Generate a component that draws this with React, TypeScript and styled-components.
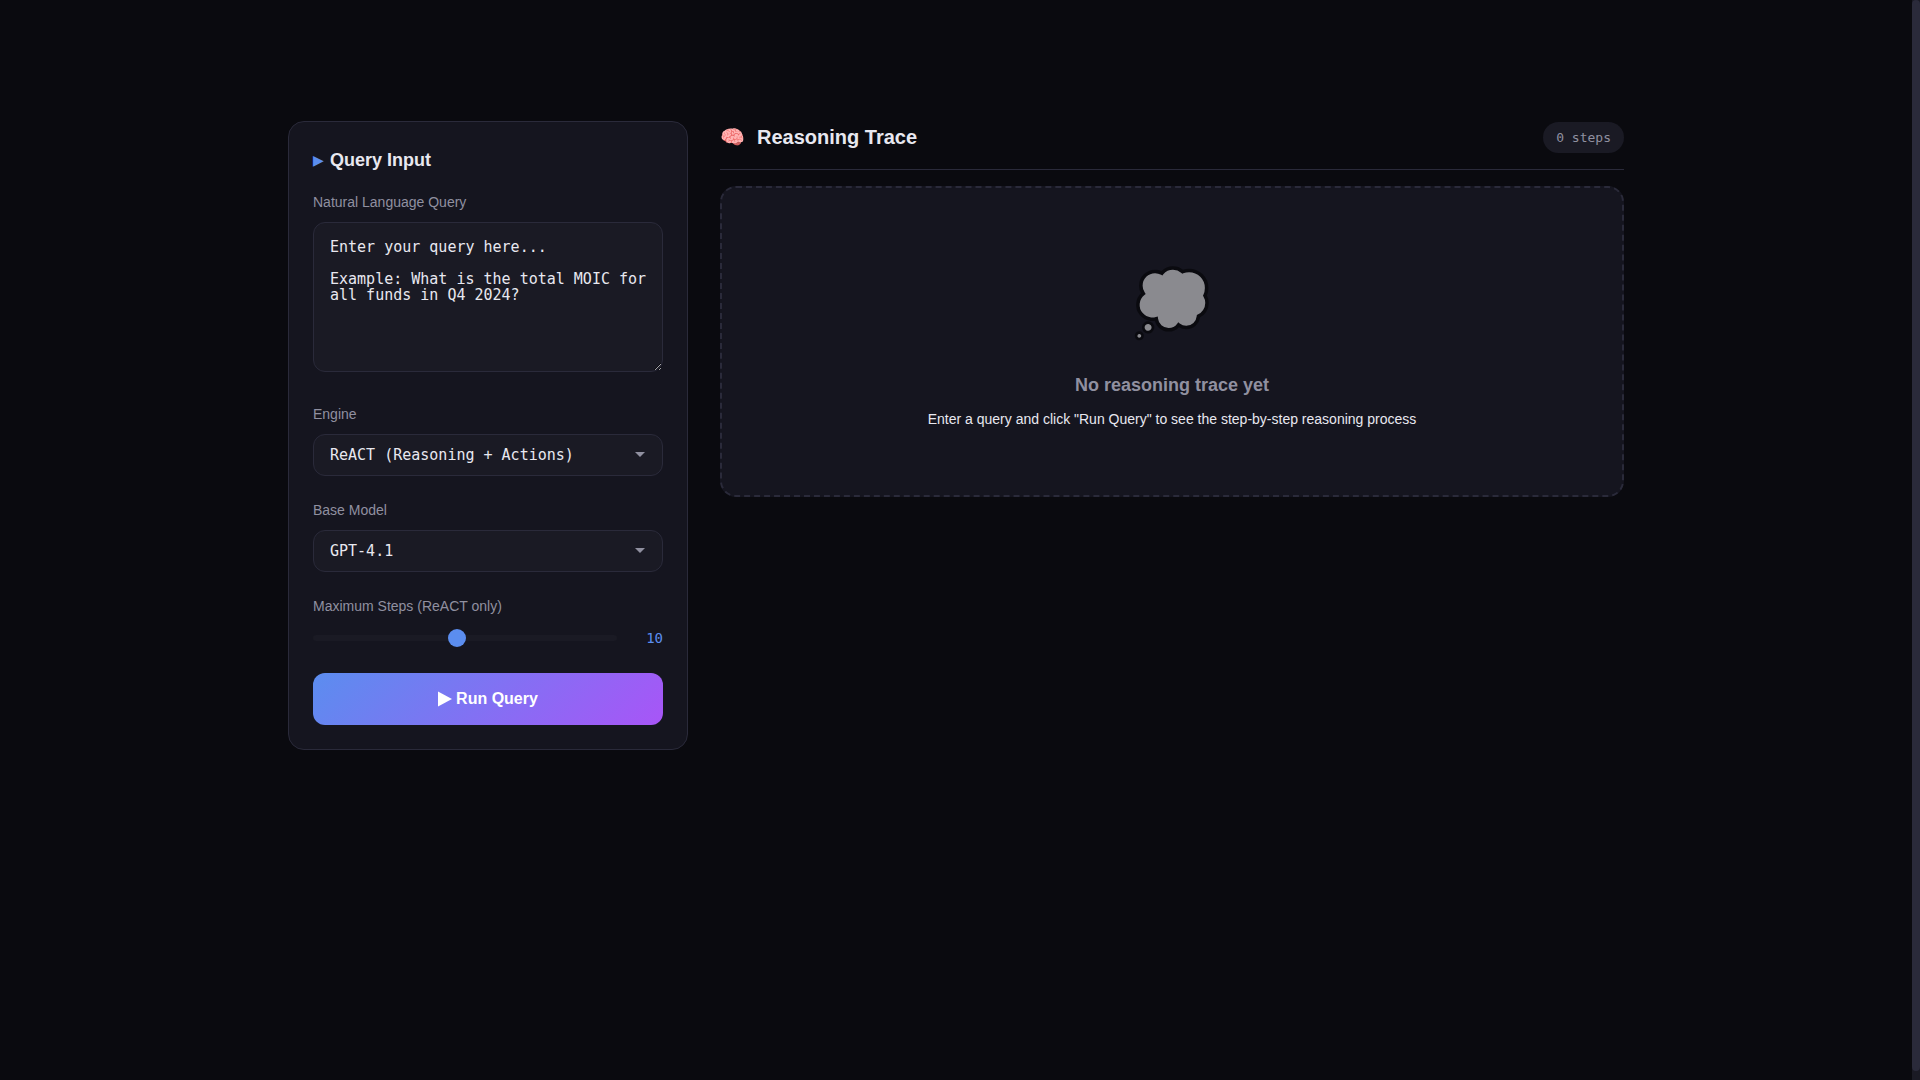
import React, { useState } from "react";
import styled, { createGlobalStyle } from "styled-components";

const color = {
  page: "#0a0a0f",
  card: "#15151f",
  field: "#1a1a24",
  line: "#2a2a3a",
  text: "#e8e8f0",
  muted: "#9090a0",
  accent: "#5b8def",
  violet: "#a855f7",
};

const sans = `"Liberation Sans", Arial, sans-serif`;
const mono = `"DejaVu Sans Mono", monospace`;

const GlobalStyle = createGlobalStyle`
  *, *::before, *::after { box-sizing: border-box; }
  *::-webkit-scrollbar { width: 8px; height: 8px; }
  body {
    margin: 0;
    background: ${color.page};
    color: ${color.text};
    font-family: ${sans};
    font-size: 14px;
    line-height: 23px;
  }
  h1, h2, h3, p { margin: 0; }
`;

const Shell = styled.div`
  display: grid;
  grid-template-columns: minmax(0, 1fr) 8px;
  min-height: 100vh;
`;

const ScrollTrack = styled.div`
  padding-bottom: 9px;
  display: flex;
  background: ${color.field};
`;

const ScrollThumb = styled.div`
  flex: 1;
  background: ${color.line};
  border-radius: 4px;
`;

const Main = styled.main`
  display: grid;
  grid-template-columns: 400px minmax(0, 1fr);
  align-items: start;
  gap: 32px;
  width: 100%;
  max-width: 1400px;
  margin: 0 auto;
  padding: 121px 32px 32px;
`;

const Card = styled.section`
  padding: 24px;
  background: ${color.card};
  border: 1px solid ${color.line};
  border-radius: 16px;
`;

const CardTitle = styled.h2`
  display: flex;
  align-items: center;
  gap: 6px;
  margin-bottom: 17px;
  font-size: 18px;
  line-height: 28px;
`;

const Marker = styled.span`
  color: ${color.accent};
  font-size: 14px;
  font-weight: 400;
`;

const Form = styled.form`
  display: flex;
  flex-direction: column;
  gap: 23px;
`;

const Field = styled.div<{ $spaced?: boolean }>`
  display: flex;
  flex-direction: column;
  gap: 8px;
  padding-bottom: ${(p) => (p.$spaced ? 8 : 0)}px;
`;

const Label = styled.label`
  color: ${color.muted};
`;

const QueryBox = styled.textarea`
  display: block;
  width: 100%;
  height: 150px;
  padding: 16px 12px 16px 16px;
  resize: vertical;
  color: ${color.text};
  background: ${color.field};
  border: 1px solid ${color.line};
  border-radius: 12px;
  font-family: ${mono};
  font-size: 15px;
  line-height: 16px;
  outline: none;
  &::placeholder { color: ${color.text}; }
  &:focus { border-color: ${color.accent}; }
`;

const SelectWrap = styled.div`
  position: relative;
`;

const Select = styled.select`
  display: block;
  width: 100%;
  height: 42px;
  padding: 0 40px 0 16px;
  appearance: none;
  color: ${color.text};
  background: ${color.field};
  border: 1px solid ${color.line};
  border-radius: 12px;
  font-family: ${mono};
  font-size: 15px;
  line-height: 16px;
`;

const Caret = styled.svg`
  position: absolute;
  top: 18px;
  right: 18px;
  pointer-events: none;
`;

const SliderRow = styled.div`
  display: flex;
  align-items: center;
  gap: 16px;
`;

const Slider = styled.input`
  flex: 1;
  min-width: 0;
  height: 6px;
  margin: 0;
  appearance: none;
  background: ${color.field};
  border-radius: 3px;
  &::-webkit-slider-thumb {
    appearance: none;
    width: 18px;
    height: 18px;
    background: ${color.accent};
    border-radius: 50%;
  }
`;

const SliderValue = styled.output`
  min-width: 30px;
  color: ${color.accent};
  font-family: ${mono};
  font-size: 14px;
  line-height: 24px;
  text-align: right;
`;

const RunButton = styled.button`
  display: flex;
  align-items: center;
  justify-content: center;
  gap: 4px;
  height: 52px;
  padding: 0 24px;
  color: #fff;
  background: linear-gradient(135deg, ${color.accent}, ${color.violet});
  border: 0;
  border-radius: 12px;
  font-family: ${sans};
  font-size: 16px;
  font-weight: 700;
  cursor: pointer;
`;

const TraceHeader = styled.div`
  display: flex;
  align-items: center;
  justify-content: space-between;
  margin-bottom: 16px;
  padding-bottom: 16px;
  border-bottom: 1px solid ${color.line};
`;

const TraceTitle = styled.h2`
  display: flex;
  gap: 12px;
  font-size: 20px;
  line-height: 32px;
`;

const StepCount = styled.span`
  padding: 4px 13px;
  color: ${color.muted};
  background: ${color.field};
  border-radius: 20px;
  font-family: ${mono};
  font-size: 13px;
`;

const EmptyState = styled.div`
  padding: 64px 32px;
  text-align: center;
  background: ${color.card};
  border: 2px dashed ${color.line};
  border-radius: 16px;
`;

const EmptyIcon = styled.div`
  margin-bottom: 16px;
  font-size: 64px;
  line-height: 102px;
  opacity: 0.5;
`;

const EmptyTitle = styled.h3`
  margin-bottom: 8px;
  color: ${color.muted};
  font-size: 18px;
  line-height: 30px;
`;

const PLACEHOLDER =
  "Enter your query here...\n\nExample: What is the total MOIC for all funds in Q4 2024?";

function Dropdown({ id, options }: { id: string; options: string[] }) {
  return (
    <SelectWrap>
      <Select id={id}>
        {options.map((o) => (
          <option key={o}>{o}</option>
        ))}
      </Select>
      <Caret width="10" height="5" viewBox="0 0 10 5" aria-hidden="true">
        <path d="M0 0h10L5 5z" fill={color.muted} />
      </Caret>
    </SelectWrap>
  );
}

export default function App() {
  const [steps, setSteps] = useState(10);

  return (
    <>
      <GlobalStyle />
      <Shell>
        <Main>
          <Card>
            <CardTitle>
              <Marker aria-hidden="true">▶</Marker>
              Query Input
            </CardTitle>
            <Form onSubmit={(e) => e.preventDefault()}>
              <Field $spaced>
                <Label htmlFor="query">Natural Language Query</Label>
                <QueryBox id="query" placeholder={PLACEHOLDER} />
              </Field>
              <Field>
                <Label htmlFor="engine">Engine</Label>
                <Dropdown id="engine" options={["ReACT (Reasoning + Actions)"]} />
              </Field>
              <Field>
                <Label htmlFor="model">Base Model</Label>
                <Dropdown id="model" options={["GPT-4.1"]} />
              </Field>
              <Field>
                <Label htmlFor="steps">Maximum Steps (ReACT only)</Label>
                <SliderRow>
                  <Slider
                    id="steps"
                    type="range"
                    min={1}
                    max={20}
                    value={steps}
                    onChange={(e) => setSteps(Number(e.target.value))}
                  />
                  <SliderValue htmlFor="steps">{steps}</SliderValue>
                </SliderRow>
              </Field>
              <RunButton type="submit">
                <svg width="14" height="16" viewBox="0 0 14 16" aria-hidden="true">
                  <path d="M0 0.5v15L14 8z" fill="currentColor" />
                </svg>
                Run Query
              </RunButton>
            </Form>
          </Card>

          <section>
            <TraceHeader>
              <TraceTitle>
                <span aria-hidden="true">🧠</span>
                Reasoning Trace
              </TraceTitle>
              <StepCount>0 steps</StepCount>
            </TraceHeader>
            <EmptyState>
              <EmptyIcon aria-hidden="true">💭</EmptyIcon>
              <EmptyTitle>No reasoning trace yet</EmptyTitle>
              <p>Enter a query and click "Run Query" to see the step-by-step reasoning process</p>
            </EmptyState>
          </section>
        </Main>
        <ScrollTrack aria-hidden="true">
          <ScrollThumb />
        </ScrollTrack>
      </Shell>
    </>
  );
}
